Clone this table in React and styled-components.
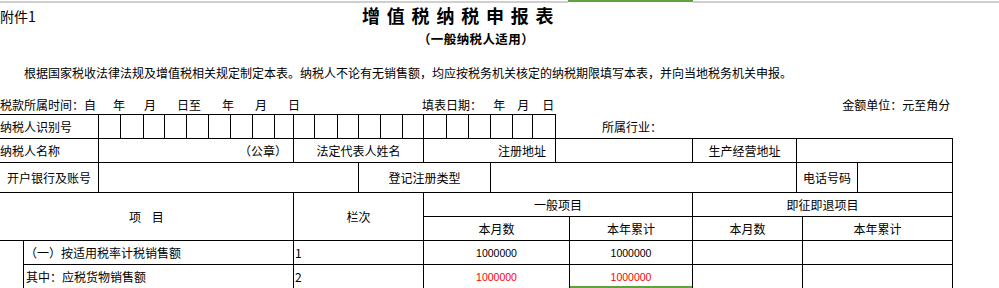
import React from "react";
import styled, { createGlobalStyle } from "styled-components";

const GlobalStyle = createGlobalStyle`
  html, body {
    margin: 0;
    padding: 0;
    background: #fff;
  }
  body {
    font-family: "Noto Sans CJK SC", "Liberation Sans", sans-serif;
    color: #000;
    overflow: hidden;
  }
`;

// turn the x of each vertical grid line into column widths
const toTemplate = (lines, rest) => {
  const cols = lines.map((x, i) => (i === 0 ? x + 1 : x - lines[i - 1]) + "px");
  if (rest) cols.push("1fr");
  return cols.join(" ");
};

const Sheet = styled.div`
  width: 999px;
  height: 288px;
  overflow: hidden;
`;

const ColumnStrip = styled.div`
  display: flex;
  height: 3px;
`;

const StripPart = styled.div`
  flex: ${({ $w }) => ($w ? `0 0 ${$w}px` : "1")};
  height: 2px;
  margin-top: ${({ $active }) => ($active ? "0" : "1px")};
  background: ${({ $active }) => ($active ? "#5fa33e" : "#cfcfcf")};
`;

const Caption = styled.div`
  display: flex;
  align-items: center;
  height: 26px;
`;

const Attachment = styled.span`
  flex: 0 0 362px;
  font-size: 14px;
  line-height: 26px;
`;

const Title = styled.h1`
  margin: 0 0 2px;
  font-size: 18px;
  font-weight: 700;
  letter-spacing: 6.8px;
  line-height: 24px;
`;

const Subtitle = styled.div`
  width: 952px;
  height: 20px;
  line-height: 20px;
  text-align: center;
  font-size: 12.5px;
  font-weight: 700;
  letter-spacing: 0.4px;
`;

const Notice = styled.p`
  margin: 16px 0 0;
  padding-left: 24px;
  height: 16px;
  line-height: 16px;
  font-size: 12px;
  white-space: nowrap;
`;

const DateLine = styled.div`
  display: flex;
  margin-top: 16px;
  height: 17px;
  line-height: 16px;
  font-size: 12px;
  white-space: nowrap;
`;

const DatePart = styled.span`
  margin-left: ${({ $ml }) => $ml || 0}px;
`;

const Grid = styled.div`
  display: grid;
  width: 953px;
  grid-template-columns: ${({ $cols }) => $cols};
  grid-auto-rows: ${({ $h }) => $h}px;
`;

const Cell = styled.div`
  display: flex;
  align-items: center;
  justify-content: ${({ $align }) =>
    $align === "center" ? "center" : $align === "right" ? "flex-end" : "flex-start"};
  padding: 0 ${({ $pr }) => $pr || 0}px 0 ${({ $pl }) => $pl || 0}px;
  border-top: ${({ $top }) => ($top ? "1px solid #000" : "none")};
  border-right: ${({ $open }) => ($open ? "none" : "1px solid #000")};
  border-bottom: 1px solid #000;
  grid-column: ${({ $colSpan }) => ($colSpan ? `span ${$colSpan}` : "auto")};
  grid-row: ${({ $rowSpan }) => ($rowSpan ? `span ${$rowSpan}` : "auto")};
  box-shadow: ${({ $selected }) => ($selected ? "inset 0 -2px 0 #5fa33e" : "none")};
  font-size: 12px;
  white-space: nowrap;
  overflow: hidden;
`;

const Amount = styled.span`
  font-family: "Liberation Sans", sans-serif;
  font-size: 10.5px;
  color: ${({ $red }) => ($red ? "#ff0000" : "#000")};
`;

const idLines = [98, 120, 143, 164, 186, 208, 230, 252, 274, 293, 314, 337, 358, 380, 402, 423, 446, 468, 490, 512, 532, 555];
const nameLines = [98, 293, 423, 555, 692, 796, 952];
const bankLines = [98, 358, 490, 796, 857, 952];
const mainLines = [23, 293, 423, 569, 692, 802, 952];

const rows = [
  { no: "1", label: "（一）按适用税率计税销售额", pl: 1, month: "1000000", year: "1000000" },
  { no: "2", label: "其中：应税货物销售额", pl: 2, month: "1000000", year: "1000000", red: true },
];

export default function App() {
  return (
    <Sheet>
      <GlobalStyle />
      <ColumnStrip>
        <StripPart $w={568} />
        <StripPart $w={125} $active />
        <StripPart />
      </ColumnStrip>

      <Caption>
        <Attachment>附件1</Attachment>
        <Title>增值税纳税申报表</Title>
      </Caption>
      <Subtitle>（一般纳税人适用）</Subtitle>

      <Notice>
        根据国家税收法律法规及增值税相关规定制定本表。纳税人不论有无销售额，均应按税务机关核定的纳税期限填写本表，并向当地税务机关申报。
      </Notice>

      <DateLine>
        <DatePart>税款所属时间：自</DatePart>
        <DatePart $ml={17}>年</DatePart>
        <DatePart $ml={19}>月</DatePart>
        <DatePart $ml={21}>日至</DatePart>
        <DatePart $ml={21}>年</DatePart>
        <DatePart $ml={21}>月</DatePart>
        <DatePart $ml={21}>日</DatePart>
        <DatePart $ml={122}>填表日期：</DatePart>
        <DatePart $ml={11}>年</DatePart>
        <DatePart $ml={12}>月</DatePart>
        <DatePart $ml={13}>日</DatePart>
        <DatePart $ml={288}>金额单位：元至角分</DatePart>
      </DateLine>

      <Grid $cols={toTemplate(idLines, true)} $h={25}>
        <Cell $top>纳税人识别号</Cell>
        {idLines.slice(1).map((x) => (
          <Cell key={x} $top />
        ))}
        <Cell $open $pl={46}>所属行业：</Cell>
      </Grid>

      <Grid $cols={toTemplate(nameLines)} $h={24}>
        <Cell>纳税人名称</Cell>
        <Cell $align="right" $pr={6}>（公章）</Cell>
        <Cell $align="center">法定代表人姓名</Cell>
        <Cell $align="right" $pr={9}>注册地址</Cell>
        <Cell />
        <Cell $align="center">生产经营地址</Cell>
        <Cell />
      </Grid>

      <Grid $cols={toTemplate(bankLines)} $h={30}>
        <Cell $align="center">开户银行及账号</Cell>
        <Cell />
        <Cell $align="center">登记注册类型</Cell>
        <Cell />
        <Cell $align="center">电话号码</Cell>
        <Cell />
      </Grid>

      <Grid $cols={toTemplate(mainLines)} $h={24}>
        <Cell $colSpan={2} $rowSpan={2} $align="center">项&nbsp;&nbsp;&nbsp;&nbsp;目</Cell>
        <Cell $rowSpan={2} $align="center">栏次</Cell>
        <Cell $colSpan={2} $align="center">一般项目</Cell>
        <Cell $colSpan={2} $align="center">即征即退项目</Cell>
        <Cell $align="center">本月数</Cell>
        <Cell $align="center">本年累计</Cell>
        <Cell $align="center">本月数</Cell>
        <Cell $align="center">本年累计</Cell>

        <Cell $rowSpan={2} />
        {rows.map((r) => (
          <React.Fragment key={r.no}>
            <Cell $pl={r.pl}>{r.label}</Cell>
            <Cell $pl={1}>{r.no}</Cell>
            <Cell $align="center">
              <Amount $red={r.red}>{r.month}</Amount>
            </Cell>
            <Cell $align="center" $selected={r.red}>
              <Amount $red={r.red}>{r.year}</Amount>
            </Cell>
            <Cell />
            <Cell />
          </React.Fragment>
        ))}
      </Grid>
    </Sheet>
  );
}
